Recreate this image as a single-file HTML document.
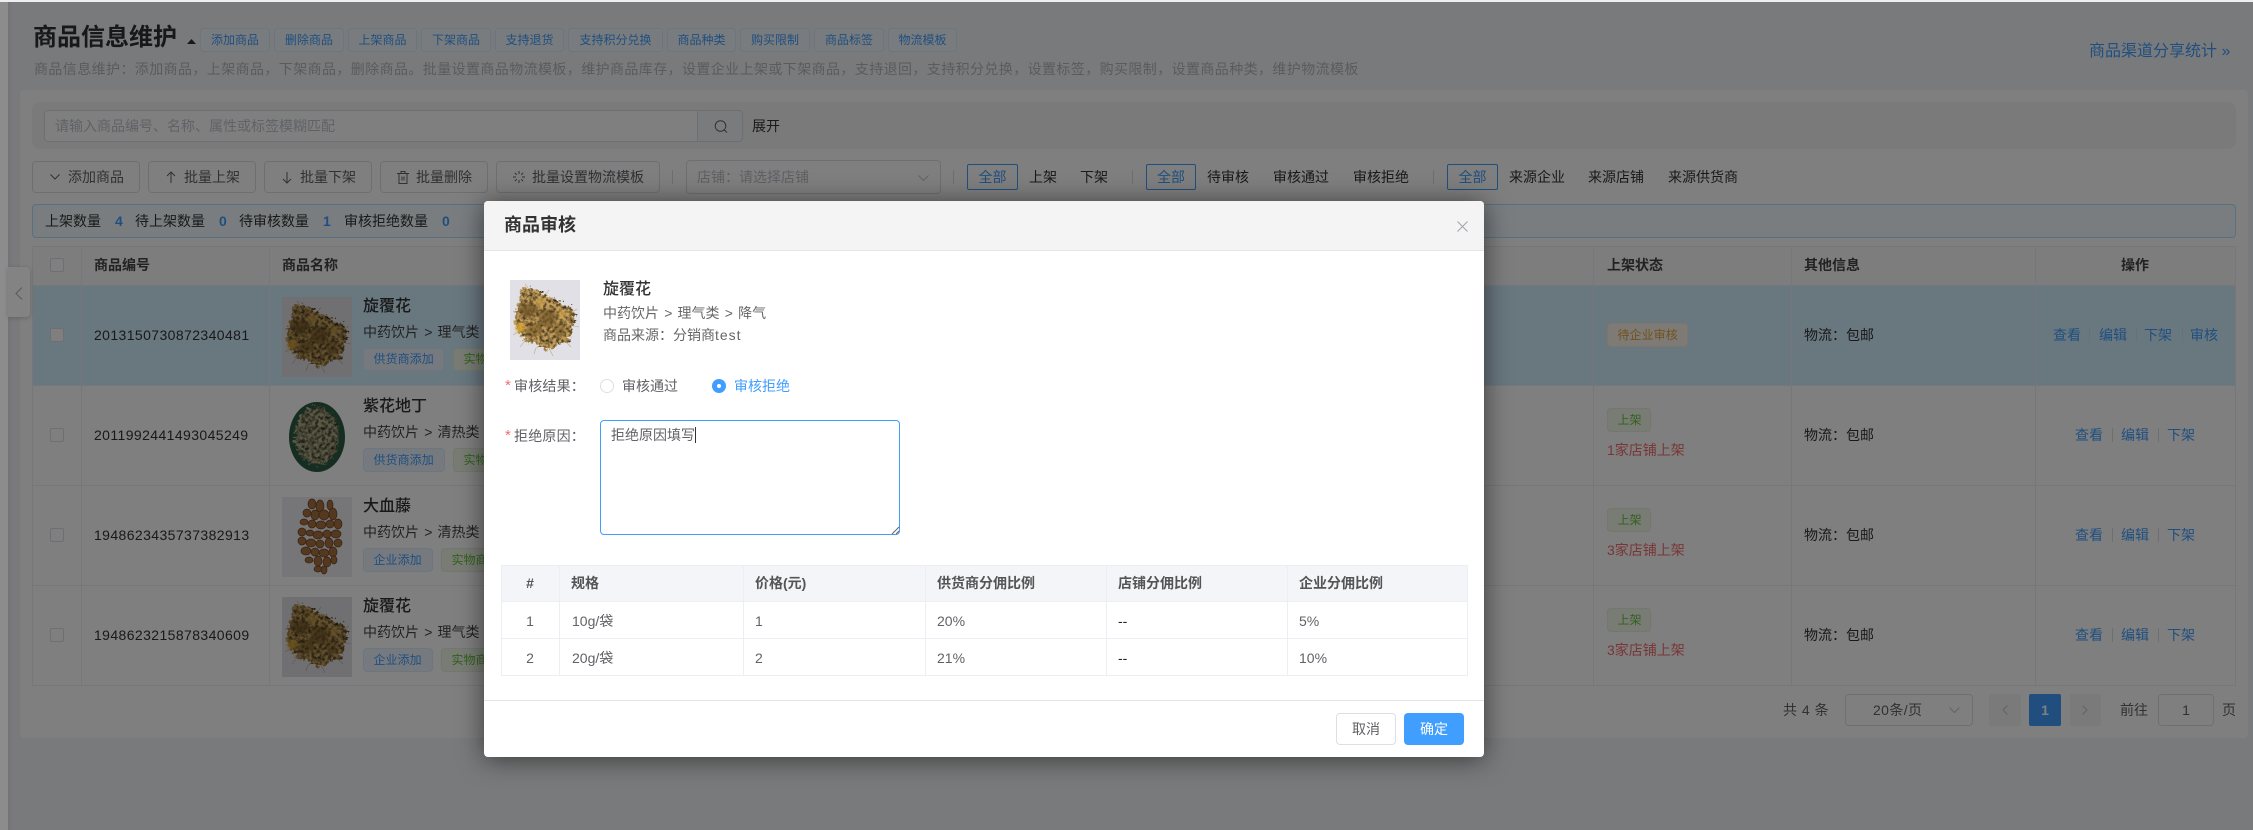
<!DOCTYPE html>
<html lang="zh-CN">
<head>
<meta charset="utf-8">
<title>商品信息维护</title>
<style>
*{box-sizing:border-box}
html,body{margin:0;padding:0;width:2253px;height:830px;overflow:hidden;background:#f3f5f9}
body{font-family:"Liberation Sans","Noto Sans CJK SC",sans-serif;font-size:14px;color:#606266;position:relative}
.l{position:absolute;left:0;top:0;width:2253px;height:830px}
.t{position:absolute;white-space:nowrap;height:20px;line-height:20px;font-size:14px}
.b{position:absolute}
.c{text-align:center}
.btn{position:absolute;top:161px;height:32px;border:1px solid #dcdfe6;border-radius:4px;background:#fff}
.tag{position:absolute;height:24px;line-height:22px;font-size:12px;border:1px solid;border-radius:4px;white-space:nowrap;padding-left:9.5px;letter-spacing:.05px}
.bl{background:#ecf5ff;border-color:#d9ecff;color:#409eff}
.gr{background:#f0f9eb;border-color:#e1f3d8;color:#67c23a}
.or{background:#fdf6ec;border-color:#faecd8;color:#e6a23c}
.hd{position:absolute;top:28px;height:24px;line-height:22px;font-size:12px;text-align:center;border:1px solid #d9ecff;background:#f3f8fe;color:#409eff;border-radius:4px;white-space:nowrap}
.box{position:absolute;top:164px;height:26px;line-height:24px;border:1px solid #409eff;border-radius:2px;color:#409eff;text-align:center}
.vl{position:absolute;width:1px;background:#dcdfe6}
.hl{position:absolute;height:1px;background:#ebeef5}
.ck{position:absolute;left:50px;width:14px;height:14px;border:1px solid #dcdfe6;border-radius:2px;background:#fff}
.nm{font-size:16px;font-weight:500;color:#303133}
.num{letter-spacing:.4px;color:#333}
.p{word-spacing:1.3px}
.a{color:#409eff}
.k{color:#333}
.r{color:#f56c6c}
.s{color:#333}
.th{font-weight:700;color:#555}
.td{color:#606266}
.dv{position:absolute;width:1px;height:14px;background:#dcdfe6}
svg{position:absolute;overflow:visible}
.ic{fill:none;stroke:#606266;stroke-width:1}
</style>
</head>
<body>
<svg width="0" height="0" style="position:absolute">
<defs>
<filter id="tx" x="-15%" y="-15%" width="130%" height="130%" color-interpolation-filters="sRGB">
<feTurbulence type="fractalNoise" baseFrequency=".3" numOctaves="3" seed="7" result="n"/>
<feDisplacementMap in="SourceGraphic" in2="n" scale="11" xChannelSelector="R" yChannelSelector="G" result="d"/>
<feColorMatrix in="n" type="matrix" values="1.7 0 0 0 -.1 1.7 0 0 0 -.1 1.7 0 0 0 -.1 0 0 0 0 1" result="g"/>
<feComposite in="g" in2="d" operator="in" result="gc"/>
<feBlend in="gc" in2="d" mode="multiply"/>
</filter>
<filter id="sf"><feGaussianBlur stdDeviation="1.6"/></filter>
<symbol id="xf" viewBox="0 0 70 80" width="70" height="80">
<rect width="70" height="80" fill="#e0e0e6"/>
<g filter="url(#tx)">
<path d="M13 8 C22 5 30 12 38 16 C46 18 50 26 58 26 C66 30 67 40 62 48 C64 58 56 66 50 62 C44 70 34 74 26 64 C18 62 8 58 6 46 C3 36 6 28 10 22 C9 16 10 10 13 8Z" fill="#c9a25c"/>
</g>
<g filter="url(#sf)">
<ellipse cx="18" cy="30" rx="9" ry="7" fill="#6b4f22" opacity=".7"/>
<ellipse cx="38" cy="38" rx="9" ry="9" fill="#6e5226" opacity=".65"/>
<ellipse cx="24" cy="50" rx="8" ry="6" fill="#7a5c2a" opacity=".6"/>
<ellipse cx="50" cy="50" rx="6" ry="7" fill="#7a5c2a" opacity=".5"/>
<ellipse cx="10" cy="48" rx="4" ry="5" fill="#d9a32a" opacity=".85"/>
<ellipse cx="30" cy="22" rx="5" ry="4" fill="#cfa64e" opacity=".8"/>
<ellipse cx="52" cy="34" rx="4" ry="4" fill="#d0a84e" opacity=".8"/>
</g>
<g fill="none" stroke="#b89a62" stroke-width=".6" opacity=".8">
<path d="M8 52l-5 3M14 62l-4 5M26 68l-2 6M40 70l3 6M56 62l5 5M64 46l5 1M62 32l5-3M18 8l-3-4M36 14l3-4"/>
</g>
</symbol>
<symbol id="zh" viewBox="0 0 70 80" width="70" height="80">
<rect width="70" height="80" fill="#fff"/>
<ellipse cx="35" cy="40" rx="28" ry="35" fill="#2c5a45"/>
<g filter="url(#tx)"><ellipse cx="35" cy="39" rx="22" ry="29" fill="#b7b48a"/></g>
</symbol>
<symbol id="dx" viewBox="0 0 70 80" width="70" height="80">
<rect width="70" height="80" fill="#ededf2"/>
<g fill="#a8703f" stroke="#6e4322" stroke-width=".7">
<ellipse cx="30" cy="7" rx="4" ry="5"/><ellipse cx="38" cy="9" rx="4" ry="6"/><ellipse cx="48" cy="8" rx="3" ry="5"/>
<ellipse cx="25" cy="16" rx="4" ry="4"/><ellipse cx="33" cy="18" rx="4" ry="5"/><ellipse cx="42" cy="18" rx="5" ry="5"/><ellipse cx="51" cy="17" rx="4" ry="6"/>
<ellipse cx="22" cy="25" rx="4" ry="3"/><ellipse cx="30" cy="27" rx="4" ry="4"/><ellipse cx="39" cy="28" rx="5" ry="4"/><ellipse cx="48" cy="27" rx="4" ry="4"/><ellipse cx="56" cy="27" rx="4" ry="5"/>
<ellipse cx="20" cy="35" rx="4" ry="4"/><ellipse cx="28" cy="36" rx="4" ry="3"/><ellipse cx="36" cy="38" rx="5" ry="4"/><ellipse cx="45" cy="37" rx="4" ry="4"/><ellipse cx="54" cy="37" rx="5" ry="4"/>
<ellipse cx="20" cy="44" rx="4" ry="4"/><ellipse cx="29" cy="46" rx="5" ry="4"/><ellipse cx="38" cy="47" rx="4" ry="4"/><ellipse cx="47" cy="46" rx="4" ry="5"/><ellipse cx="56" cy="46" rx="4" ry="4"/>
<ellipse cx="24" cy="54" rx="5" ry="4"/><ellipse cx="33" cy="55" rx="4" ry="4"/><ellipse cx="42" cy="56" rx="5" ry="4"/><ellipse cx="51" cy="55" rx="4" ry="5"/>
<ellipse cx="27" cy="63" rx="4" ry="3"/><ellipse cx="36" cy="64" rx="4" ry="5"/><ellipse cx="45" cy="65" rx="4" ry="5"/><ellipse cx="52" cy="63" rx="3" ry="4"/>
<ellipse cx="36" cy="72" rx="4" ry="3"/><ellipse cx="42" cy="73" rx="3" ry="4"/>
</g>
</symbol>
</defs>
</svg>

<div class="l" id="bg">
<!-- header -->
<div class="t" style="left:33px;top:22px;height:32px;line-height:32px;font-size:24px;font-weight:700;color:#303133">商品信息维护</div>
<svg style="left:187px;top:39px" width="9" height="5"><path d="M0 5L4.5 0 9 5Z" fill="#303133"/></svg>
<div class="hd" style="left:200px;width:70px">添加商品</div>
<div class="hd" style="left:274px;width:70px">删除商品</div>
<div class="hd" style="left:348px;width:69px">上架商品</div>
<div class="hd" style="left:421px;width:70px">下架商品</div>
<div class="hd" style="left:495px;width:69px">支持退货</div>
<div class="hd" style="left:568px;width:95px">支持积分兑换</div>
<div class="hd" style="left:667px;width:69px">商品种类</div>
<div class="hd" style="left:740px;width:70px">购买限制</div>
<div class="hd" style="left:814px;width:70px">商品标签</div>
<div class="hd" style="left:888px;width:69px">物流模板</div>
<div class="t" style="left:34px;top:59px;color:#b4b6bc;letter-spacing:.4px">商品信息维护：添加商品，上架商品，下架商品，删除商品。批量设置商品物流模板，维护商品库存，设置企业上架或下架商品，支持退回，支持积分兑换，设置标签，购买限制，设置商品种类，维护物流模板</div>
<div class="t a" style="left:2089px;top:41px;height:22px;line-height:22px;font-size:16px">商品渠道分享统计 »</div>

<!-- card -->
<div class="b" style="left:20px;top:90px;width:2228px;height:648px;background:#fff;border-radius:4px"></div>
<div class="b" style="left:32px;top:102px;width:2204px;height:47px;background:#f5f5f5;border-radius:8px"></div>
<div class="b" style="left:44px;top:110px;width:699px;height:32px;background:#fff;border:1px solid #dcdfe6;border-radius:4px"></div>
<div class="b" style="left:697px;top:110px;width:46px;height:32px;background:#f5f7fa;border:1px solid #dcdfe6;border-radius:0 4px 4px 0"></div>
<div class="t" style="left:55px;top:116px;color:#c0c4cc">请输入商品编号、名称、属性或标签模糊匹配</div>
<svg style="left:714px;top:120px" width="14" height="14" class="ic"><circle cx="6.5" cy="6" r="5.3"/><path d="M10.5 10l2.5 2.6"/></svg>
<div class="t s" style="left:752px;top:116px">展开</div>

<!-- buttons -->
<div class="btn" style="left:32px;width:108px"></div>
<svg style="left:50px;top:174px" width="10" height="6" class="ic"><path d="M.5 .5L5 5 9.5 .5"/></svg>
<div class="t" style="left:68px;top:167px">添加商品</div>
<div class="btn" style="left:148px;width:108px"></div>
<svg style="left:166px;top:171px" width="10" height="12" class="ic"><path d="M5 12V1M1 5l4-4 4 4"/></svg>
<div class="t" style="left:184px;top:167px">批量上架</div>
<div class="btn" style="left:264px;width:108px"></div>
<svg style="left:282px;top:172px" width="10" height="12" class="ic"><path d="M5 0v11M1 7l4 4 4-4"/></svg>
<div class="t" style="left:300px;top:167px">批量下架</div>
<div class="btn" style="left:380px;width:108px"></div>
<svg style="left:397px;top:171px" width="12" height="13" class="ic"><path d="M0 2.5h12M4 2.5V.5h4v2M2 2.5v10h8v-10M5 5.5v4M7 5.5v4"/></svg>
<div class="t" style="left:416px;top:167px">批量删除</div>
<div class="btn" style="left:496px;width:164px"></div>
<svg style="left:513px;top:171px" width="12" height="12" class="ic"><path d="M6 0v3M6 9v3M0 6h3M9 6h3M1.8 1.8l2 2M8.2 8.2l2 2M10.2 1.8l-2 2M3.8 8.2l-2 2"/></svg>
<div class="t" style="left:532px;top:167px">批量设置物流模板</div>
<div class="vl" style="left:672px;top:170px;height:14px"></div>
<div class="b" style="left:686px;top:160px;width:255px;height:34px;background:#fff;border:1px solid #dcdfe6;border-radius:4px"></div>
<div class="t" style="left:697px;top:167px;color:#bcc0c8">店铺：请选择店铺</div>
<svg style="left:918px;top:175px" width="11" height="6"><path d="M.5 .5L5.5 5.5 10.5 .5" fill="none" stroke="#c0c4cc"/></svg>
<div class="vl" style="left:953px;top:170px;height:14px"></div>
<div class="box" style="left:967px;width:51px">全部</div>
<div class="t k" style="left:1029px;top:167px">上架</div>
<div class="t k" style="left:1080px;top:167px">下架</div>
<div class="vl" style="left:1132px;top:170px;height:14px"></div>
<div class="box" style="left:1146px;width:50px">全部</div>
<div class="t k" style="left:1207px;top:167px">待审核</div>
<div class="t k" style="left:1273px;top:167px">审核通过</div>
<div class="t k" style="left:1353px;top:167px">审核拒绝</div>
<div class="vl" style="left:1433px;top:170px;height:14px"></div>
<div class="box" style="left:1447px;width:51px">全部</div>
<div class="t k" style="left:1509px;top:167px">来源企业</div>
<div class="t k" style="left:1588px;top:167px">来源店铺</div>
<div class="t k" style="left:1668px;top:167px">来源供货商</div>

<!-- alert -->
<div class="b" style="left:32px;top:204px;width:2204px;height:34px;background:#f2fbff;border:1px solid #b0e0ff;border-radius:4px"></div>
<div class="t k" style="left:45px;top:211px">上架数量</div>
<div class="t a" style="left:115px;top:211px;font-weight:700">4</div>
<div class="t k" style="left:135px;top:211px">待上架数量</div>
<div class="t a" style="left:219px;top:211px;font-weight:700">0</div>
<div class="t k" style="left:239px;top:211px">待审核数量</div>
<div class="t a" style="left:323px;top:211px;font-weight:700">1</div>
<div class="t k" style="left:344px;top:211px">审核拒绝数量</div>
<div class="t a" style="left:442px;top:211px;font-weight:700">0</div>

<!-- table -->
<div class="b" style="left:32px;top:246px;width:2204px;height:39px;background:#fafafc"></div>
<div class="b" style="left:33px;top:286px;width:2203px;height:99px;background:#d2efff"></div>
<div class="hl" style="left:32px;top:246px;width:2204px"></div>
<div class="hl" style="left:32px;top:285px;width:2204px"></div>
<div class="hl" style="left:32px;top:385px;width:2204px"></div>
<div class="hl" style="left:32px;top:485px;width:2204px"></div>
<div class="hl" style="left:32px;top:585px;width:2204px"></div>
<div class="hl" style="left:32px;top:685px;width:2204px"></div>
<div class="vl" style="left:32px;top:246px;height:440px;background:#ebeef5"></div>
<div class="vl" style="left:81px;top:246px;height:440px;background:#ebeef5"></div>
<div class="vl" style="left:269px;top:246px;height:440px;background:#ebeef5"></div>
<div class="vl" style="left:1593px;top:246px;height:440px;background:#ebeef5"></div>
<div class="vl" style="left:1791px;top:246px;height:440px;background:#ebeef5"></div>
<div class="vl" style="left:2035px;top:246px;height:440px;background:#ebeef5"></div>
<div class="vl" style="left:2235px;top:246px;height:440px;background:#ebeef5"></div>

<div class="ck" style="top:258px"></div>
<div class="t" style="left:94px;top:255px;font-weight:700;color:#444">商品编号</div>
<div class="t" style="left:282px;top:255px;font-weight:700;color:#444">商品名称</div>
<div class="t" style="left:1607px;top:255px;font-weight:700;color:#444">上架状态</div>
<div class="t" style="left:1804px;top:255px;font-weight:700;color:#444">其他信息</div>
<div class="t" style="left:2121px;top:255px;font-weight:700;color:#444">操作</div>

<!-- row 1 -->
<div class="ck" style="top:328px"></div>
<div class="t num" style="left:94px;top:325px">2013150730872340481</div>
<svg style="left:282px;top:297px" width="70" height="80"><use href="#xf"/></svg>
<div class="t nm" style="left:363px;top:297px">旋覆花</div>
<div class="t p" style="left:363px;top:322px;color:#444">中药饮片 &gt; 理气类 &gt; 降气</div>
<div class="tag bl" style="left:363px;top:348px;width:81px;height:23px;line-height:21px">供货商添加</div>
<div class="tag gr" style="left:453px;top:348px;width:69px;height:23px;line-height:21px">实物商品</div>
<div class="tag or" style="left:1607px;top:323px;width:81px">待企业审核</div>
<div class="t k" style="left:1804px;top:325px">物流：包邮</div>
<div class="t a" style="left:2053px;top:325px">查看</div><div class="dv" style="left:2089px;top:328px"></div>
<div class="t a" style="left:2099px;top:325px">编辑</div><div class="dv" style="left:2136px;top:328px"></div>
<div class="t a" style="left:2144px;top:325px">下架</div><div class="dv" style="left:2182px;top:328px"></div>
<div class="t a" style="left:2190px;top:325px">审核</div>

<!-- row 2 -->
<div class="ck" style="top:428px"></div>
<div class="t num" style="left:94px;top:425px">2011992441493045249</div>
<svg style="left:282px;top:397px" width="70" height="80"><use href="#zh"/></svg>
<div class="t nm" style="left:363px;top:397px">紫花地丁</div>
<div class="t p" style="left:363px;top:422px;color:#444">中药饮片 &gt; 清热类 &gt; 清热解毒</div>
<div class="tag bl" style="left:363px;top:448px;width:82px">供货商添加</div>
<div class="tag gr" style="left:453px;top:448px;width:69px">实物商品</div>
<div class="tag gr" style="left:1607px;top:408px;width:44px">上架</div>
<div class="t r" style="left:1607px;top:440px">1家店铺上架</div>
<div class="t k" style="left:1804px;top:425px">物流：包邮</div>
<div class="t a" style="left:2075px;top:425px">查看</div><div class="dv" style="left:2112px;top:428px"></div>
<div class="t a" style="left:2121px;top:425px">编辑</div><div class="dv" style="left:2158px;top:428px"></div>
<div class="t a" style="left:2167px;top:425px">下架</div>

<!-- row 3 -->
<div class="ck" style="top:528px"></div>
<div class="t num" style="left:94px;top:525px">1948623435737382913</div>
<svg style="left:282px;top:497px" width="70" height="80"><use href="#dx"/></svg>
<div class="t nm" style="left:363px;top:497px">大血藤</div>
<div class="t p" style="left:363px;top:522px;color:#444">中药饮片 &gt; 清热类 &gt; 清热解毒</div>
<div class="tag bl" style="left:363px;top:548px;width:70px">企业添加</div>
<div class="tag gr" style="left:441px;top:548px;width:69px">实物商品</div>
<div class="tag gr" style="left:1607px;top:508px;width:44px">上架</div>
<div class="t r" style="left:1607px;top:540px">3家店铺上架</div>
<div class="t k" style="left:1804px;top:525px">物流：包邮</div>
<div class="t a" style="left:2075px;top:525px">查看</div><div class="dv" style="left:2112px;top:528px"></div>
<div class="t a" style="left:2121px;top:525px">编辑</div><div class="dv" style="left:2158px;top:528px"></div>
<div class="t a" style="left:2167px;top:525px">下架</div>

<!-- row 4 -->
<div class="ck" style="top:628px"></div>
<div class="t num" style="left:94px;top:625px">1948623215878340609</div>
<svg style="left:282px;top:597px" width="70" height="80"><use href="#xf"/></svg>
<div class="t nm" style="left:363px;top:597px">旋覆花</div>
<div class="t p" style="left:363px;top:622px;color:#444">中药饮片 &gt; 理气类 &gt; 降气</div>
<div class="tag bl" style="left:363px;top:648px;width:70px">企业添加</div>
<div class="tag gr" style="left:441px;top:648px;width:69px">实物商品</div>
<div class="tag gr" style="left:1607px;top:608px;width:44px">上架</div>
<div class="t r" style="left:1607px;top:640px">3家店铺上架</div>
<div class="t k" style="left:1804px;top:625px">物流：包邮</div>
<div class="t a" style="left:2075px;top:625px">查看</div><div class="dv" style="left:2112px;top:628px"></div>
<div class="t a" style="left:2121px;top:625px">编辑</div><div class="dv" style="left:2158px;top:628px"></div>
<div class="t a" style="left:2167px;top:625px">下架</div>

<!-- pagination -->
<div class="t" style="left:1783px;top:700px;word-spacing:1px">共 4 条</div>
<div class="b" style="left:1845px;top:694px;width:128px;height:32px;border:1px solid #dcdfe6;border-radius:4px;background:#fff"></div>
<div class="t" style="left:1873px;top:700px;letter-spacing:.4px">20条/页</div>
<svg style="left:1949px;top:707px" width="11" height="6"><path d="M.5 .5L5.5 5.5 10.5 .5" fill="none" stroke="#c0c4cc"/></svg>
<div class="b" style="left:1989px;top:694px;width:32px;height:32px;background:#f4f4f5;border-radius:2px"></div>
<svg style="left:2002px;top:705px" width="6" height="10"><path d="M5.5 .5L1 5l4.5 4.5" fill="none" stroke="#c0c4cc"/></svg>
<div class="b c" style="left:2029px;top:694px;width:32px;height:32px;line-height:32px;background:#409eff;color:#fff;font-weight:700;border-radius:2px">1</div>
<div class="b" style="left:2070px;top:694px;width:31px;height:32px;background:#f4f4f5;border-radius:2px"></div>
<svg style="left:2082px;top:705px" width="6" height="10"><path d="M.5 .5L5 5 .5 9.5" fill="none" stroke="#c0c4cc"/></svg>
<div class="t" style="left:2120px;top:700px">前往</div>
<div class="b c" style="left:2158px;top:694px;width:56px;height:32px;line-height:30px;border:1px solid #dcdfe6;border-radius:4px;background:#fff">1</div>
<div class="t" style="left:2222px;top:700px">页</div>
</div>

<!-- overlay -->
<div class="l" style="background:rgba(0,0,0,.5)"></div>

<!-- chrome above overlay -->
<div class="b" style="left:0;top:2px;width:8px;height:828px;background:#8c8c8c"></div>
<div class="b" style="left:8px;top:2px;width:5px;height:828px;background:linear-gradient(90deg,#737375,rgba(115,115,117,0))"></div>
<div class="b" style="left:0;top:0;width:2253px;height:2px;background:#efefef"></div>
<div class="b" style="left:8px;top:267px;width:22px;height:50px;background:#838383;border-radius:0 4px 4px 0;box-shadow:0 1px 5px rgba(0,0,0,.2)"></div>
<svg style="left:15px;top:287px" width="8" height="13"><path d="M7 .5L1 6.5l6 6" fill="none" stroke="#5f5f60" stroke-width="1.2"/></svg>

<!-- dialog -->
<div class="l">
<div class="b" style="left:484px;top:201px;width:1000px;height:556px;background:#fff;border-radius:4px;box-shadow:0 2px 26px rgba(0,0,0,.55)"></div>
<div class="b" style="left:484px;top:201px;width:1000px;height:50px;background:#f4f4f4;border-bottom:1px solid #e4e4ec;border-radius:4px 4px 0 0"></div>
<div class="t" style="left:504px;top:213px;height:24px;line-height:24px;font-size:18px;font-weight:700;color:#333">商品审核</div>
<svg style="left:1457px;top:221px" width="11" height="11"><path d="M.5 .5l10 10M10.5 .5l-10 10" fill="none" stroke="#a0a3aa"/></svg>

<svg style="left:510px;top:280px" width="70" height="80"><use href="#xf"/></svg>
<div class="t nm" style="left:603px;top:280px;color:#333">旋覆花</div>
<div class="t p" style="left:603px;top:303px;color:#666">中药饮片 &gt; 理气类 &gt; 降气</div>
<div class="t" style="left:603px;top:325px;color:#666">商品来源：分销商<span style="letter-spacing:1px">test</span></div>

<div class="t r" style="left:505px;top:376px;font-size:15px">*</div>
<div class="t" style="left:514px;top:376px;color:#606266;letter-spacing:.2px">审核结果：</div>
<div class="b" style="left:600px;top:379px;width:14px;height:14px;border:1px solid #dcdfe6;border-radius:50%"></div>
<div class="t" style="left:622px;top:376px;color:#606266">审核通过</div>
<div class="b" style="left:712px;top:379px;width:14px;height:14px;background:#409eff;border-radius:50%"></div>
<div class="b" style="left:717px;top:384px;width:4px;height:4px;background:#fff;border-radius:50%"></div>
<div class="t a" style="left:734px;top:376px">审核拒绝</div>

<div class="t r" style="left:505px;top:426px;font-size:15px">*</div>
<div class="t" style="left:514px;top:426px;color:#606266;letter-spacing:.2px">拒绝原因：</div>
<div class="b" style="left:600px;top:420px;width:300px;height:115px;border:1px solid #409eff;border-radius:4px;background:#fff"></div>
<div class="t" style="left:611px;top:425px;color:#606266">拒绝原因填写</div>
<div class="b" style="left:695px;top:427px;width:1px;height:16px;background:#333"></div>
<svg style="left:892px;top:527px" width="7" height="7"><path d="M0 7L7 0M4 7L7 4" fill="none" stroke="#666"/></svg>

<!-- spec table -->
<div class="b" style="left:501px;top:565px;width:967px;height:37px;background:#f3f5f9"></div>
<div class="hl" style="left:501px;top:565px;width:967px"></div>
<div class="hl" style="left:501px;top:601px;width:967px"></div>
<div class="hl" style="left:501px;top:638px;width:967px"></div>
<div class="hl" style="left:501px;top:675px;width:967px"></div>
<div class="vl" style="left:501px;top:565px;height:111px;background:#ebeef5"></div>
<div class="vl" style="left:559px;top:565px;height:111px;background:#ebeef5"></div>
<div class="vl" style="left:743px;top:565px;height:111px;background:#ebeef5"></div>
<div class="vl" style="left:925px;top:565px;height:111px;background:#ebeef5"></div>
<div class="vl" style="left:1106px;top:565px;height:111px;background:#ebeef5"></div>
<div class="vl" style="left:1287px;top:565px;height:111px;background:#ebeef5"></div>
<div class="vl" style="left:1467px;top:565px;height:111px;background:#ebeef5"></div>

<div class="t c th" style="left:501px;width:58px;top:573px">#</div>
<div class="t th" style="left:571px;top:573px">规格</div>
<div class="t th" style="left:755px;top:573px">价格(元)</div>
<div class="t th" style="left:937px;top:573px">供货商分佣比例</div>
<div class="t th" style="left:1118px;top:573px">店铺分佣比例</div>
<div class="t th" style="left:1299px;top:573px">企业分佣比例</div>

<div class="t c td" style="left:501px;width:58px;top:611px">1</div>
<div class="t td" style="left:572px;top:611px">10g/袋</div>
<div class="t td" style="left:755px;top:611px">1</div>
<div class="t td" style="left:937px;top:611px">20%</div>
<div class="t" style="left:1118px;top:611px;color:#222">--</div>
<div class="t td" style="left:1299px;top:611px">5%</div>

<div class="t c td" style="left:501px;width:58px;top:648px">2</div>
<div class="t td" style="left:572px;top:648px">20g/袋</div>
<div class="t td" style="left:755px;top:648px">2</div>
<div class="t td" style="left:937px;top:648px">21%</div>
<div class="t" style="left:1118px;top:648px;color:#222">--</div>
<div class="t td" style="left:1299px;top:648px">10%</div>

<div class="hl" style="left:484px;top:700px;width:1000px;background:#e4e4ec"></div>
<div class="b c" style="left:1336px;top:713px;width:60px;height:32px;line-height:30px;border:1px solid #dcdfe6;border-radius:4px;background:#fff;color:#606266">取消</div>
<div class="b c" style="left:1404px;top:713px;width:60px;height:32px;line-height:32px;border-radius:4px;background:#409eff;color:#fff">确定</div>
</div>
</body>
</html>
